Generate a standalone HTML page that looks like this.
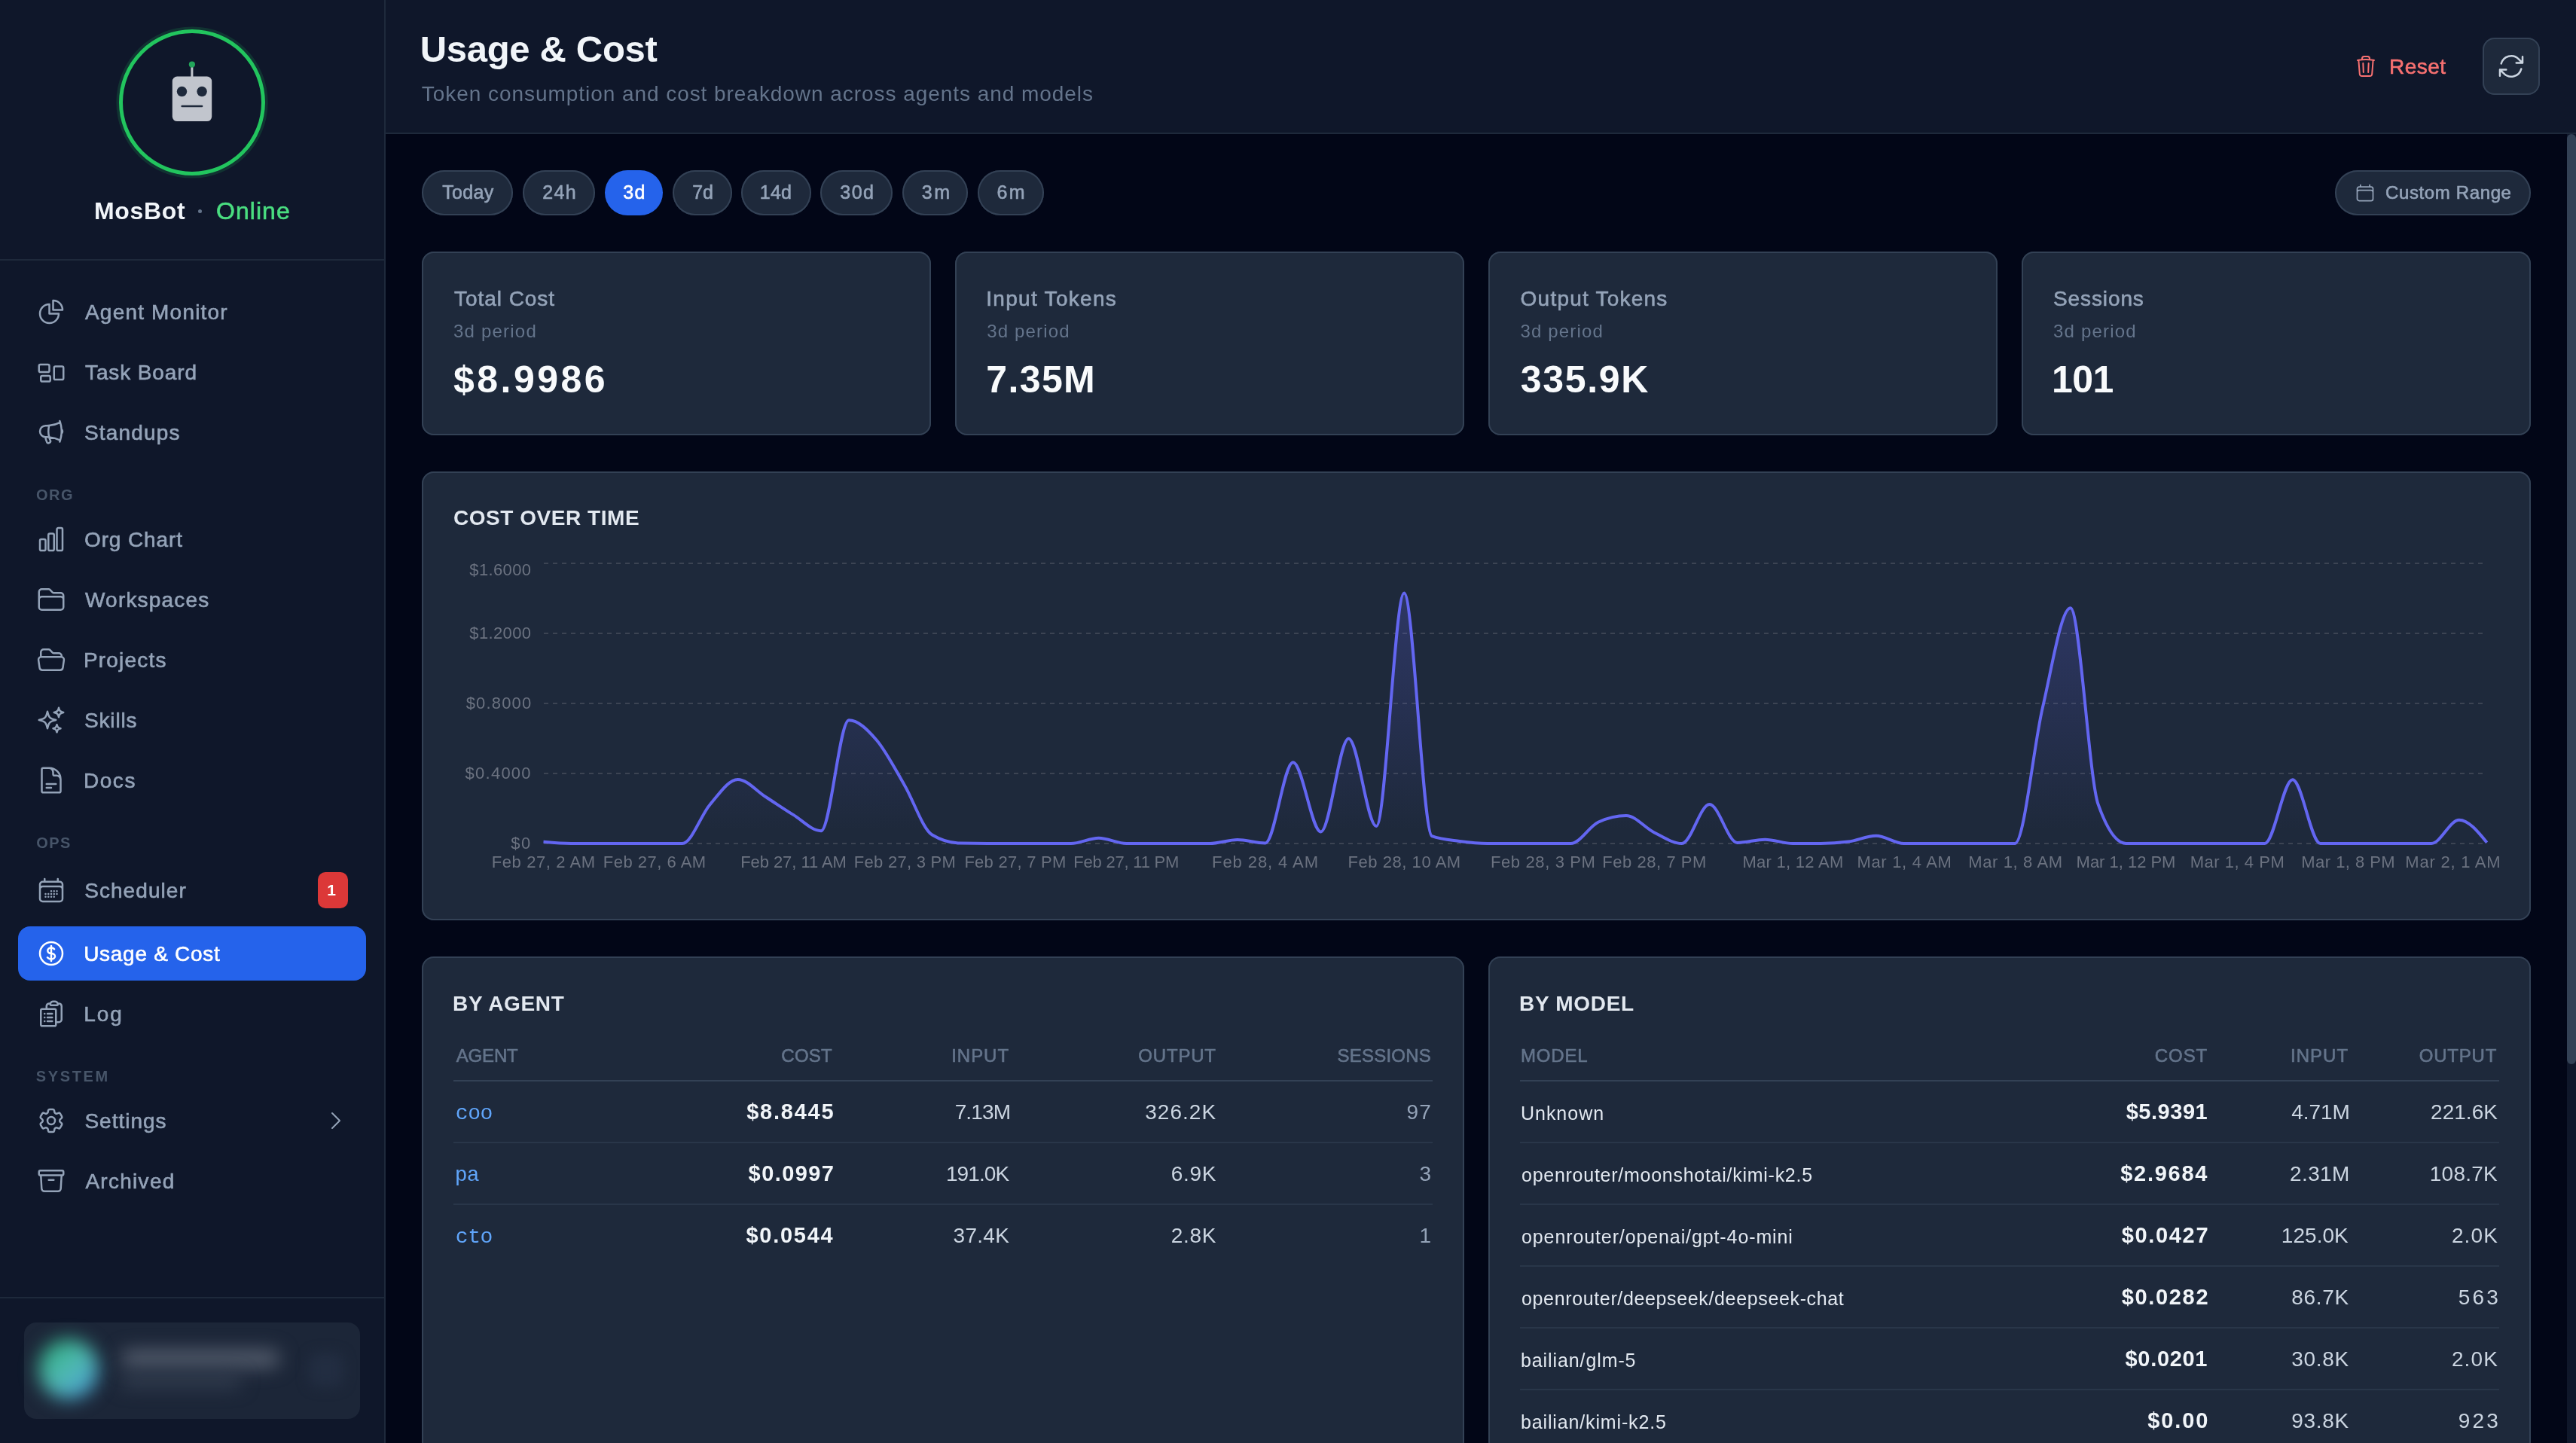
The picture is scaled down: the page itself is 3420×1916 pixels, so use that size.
<!DOCTYPE html>
<html><head><meta charset="utf-8"><title>Usage &amp; Cost</title>
<style>
html,body{margin:0;padding:0;background:#020617;overflow:hidden}
#root{zoom:2;will-change:transform;position:relative;width:1710px;height:958px;overflow:hidden;background:#020617;font-family:'Liberation Sans', sans-serif}
@media (max-width:1800px){#root{zoom:1}}
.t{position:absolute;white-space:nowrap}
.r{position:absolute}
svg{overflow:visible}
</style></head><body><div id="root">
<div class="r" style="left:0px;top:0px;width:256px;height:958px;background:#0f172a;"></div><div class="r" style="left:255px;top:0px;width:1px;height:958px;background:#1e293b;"></div><div class="r" style="left:79px;top:19.6px;width:97px;height:97px;border-radius:50%;box-sizing:border-box;border:2.5px solid #22c55e;box-shadow:0 0 0 1.8px rgba(34,197,94,0.16)"></div><svg class="r" style="left:0;top:0" width="256" height="172" viewBox="0 0 256 172">
<rect x="126.7" y="43" width="1.5" height="9" fill="#c1c5cd"/>
<circle cx="127.45" cy="42.8" r="2.05" fill="#22a55a"/>
<rect x="114.4" y="50.8" width="26.2" height="29.7" rx="3.2" fill="#c1c5cd"/>
<circle cx="120.75" cy="60.75" r="3.35" fill="#1e293b"/>
<circle cx="134.05" cy="60.75" r="3.35" fill="#1e293b"/>
<rect x="120.2" y="69.85" width="14.5" height="1.3" rx="0.65" fill="#1e293b"/>
</svg><div class="t" id="mosbot" style="top:128.06px;font-size:16px;line-height:24px;color:#f1f5f9;font-weight:700;font-family:'Liberation Sans', sans-serif;letter-spacing:0.330px;left:62.50px;">MosBot</div><div class="r" style="left:131.5px;top:138.8px;width:2.6px;height:2.6px;border-radius:50%;background:#64748b"></div><div class="t" id="online" style="top:128.06px;font-size:16px;line-height:24px;color:#4ade80;font-weight:400;font-family:'Liberation Sans', sans-serif;letter-spacing:0.520px;left:143.50px;-webkit-text-stroke:0.3px currentColor;">Online</div><div class="r" style="left:0px;top:172px;width:255px;height:1px;background:#1e293b;"></div><svg style="position:absolute;left:24px;top:197.0px" width="20" height="20" viewBox="0 0 24 24" fill="none" stroke="#94a3b8" stroke-width="1.5" stroke-linecap="round" stroke-linejoin="round"><path d="M10.5 6a7.5 7.5 0 1 0 7.5 7.5h-7.5V6Z"/><path d="M13.5 10.5H21A7.5 7.5 0 0 0 13.5 3v7.5Z"/></svg><div class="t" id="nav_am" style="top:197.74px;font-size:14px;line-height:20px;color:#94a3b8;font-weight:400;font-family:'Liberation Sans', sans-serif;letter-spacing:0.596px;left:56.50px;-webkit-text-stroke:0.3px currentColor;">Agent Monitor</div><svg style="position:absolute;left:24px;top:237.0px" width="20" height="20" viewBox="0 0 24 24" fill="none" stroke="#94a3b8" stroke-width="1.5" stroke-linecap="round" stroke-linejoin="round"><path d="M2.25 7.125C2.25 6.504 2.754 6 3.375 6h6c.621 0 1.125.504 1.125 1.125v3.75c0 .621-.504 1.125-1.125 1.125h-6a1.125 1.125 0 0 1-1.125-1.125v-3.75ZM14.25 8.625c0-.621.504-1.125 1.125-1.125h5.25c.621 0 1.125.504 1.125 1.125v8.25c0 .621-.504 1.125-1.125 1.125h-5.25a1.125 1.125 0 0 1-1.125-1.125v-8.25ZM3.75 16.125c0-.621.504-1.125 1.125-1.125h5.25c.621 0 1.125.504 1.125 1.125v2.25c0 .621-.504 1.125-1.125 1.125h-5.25a1.125 1.125 0 0 1-1.125-1.125v-2.25Z"/></svg><div class="t" id="nav_tb" style="top:237.74px;font-size:14px;line-height:20px;color:#94a3b8;font-weight:400;font-family:'Liberation Sans', sans-serif;letter-spacing:0.444px;left:56.50px;-webkit-text-stroke:0.3px currentColor;">Task Board</div><svg style="position:absolute;left:24px;top:277.0px" width="20" height="20" viewBox="0 0 24 24" fill="none" stroke="#94a3b8" stroke-width="1.5" stroke-linecap="round" stroke-linejoin="round"><path d="M10.34 15.84c-.688-.06-1.386-.09-2.09-.09H7.5a4.5 4.5 0 1 1 0-9h.75c.704 0 1.402-.03 2.09-.09m0 9.18c.253.962.584 1.892.985 2.783.247.55.06 1.21-.463 1.511l-.657.38c-.551.318-1.26.117-1.527-.461a20.845 20.845 0 0 1-1.44-4.282m3.102.069a18.03 18.03 0 0 1-.59-4.59c0-1.586.205-3.124.59-4.59m0 9.18a23.848 23.848 0 0 1 8.835 2.535M10.34 6.66a23.847 23.847 0 0 0 8.835-2.535m0 0A23.74 23.74 0 0 0 18.795 3m.38 1.125a23.91 23.91 0 0 1 1.014 5.395m-1.014 8.855c-.118.38-.245.754-.38 1.125m.38-1.125a23.91 23.91 0 0 0 1.014-5.395m0-3.46c.495.413.811 1.035.811 1.73 0 .695-.316 1.317-.811 1.73m0-3.46a24.347 24.347 0 0 1 0 3.46"/></svg><div class="t" id="nav_st" style="top:277.74px;font-size:14px;line-height:20px;color:#94a3b8;font-weight:400;font-family:'Liberation Sans', sans-serif;letter-spacing:0.589px;left:56.00px;-webkit-text-stroke:0.3px currentColor;">Standups</div><svg style="position:absolute;left:24px;top:348.0px" width="20" height="20" viewBox="0 0 24 24" fill="none" stroke="#94a3b8" stroke-width="1.5" stroke-linecap="round" stroke-linejoin="round"><path d="M3 13.125C3 12.504 3.504 12 4.125 12h2.25c.621 0 1.125.504 1.125 1.125v6.75C7.5 20.496 6.996 21 6.375 21h-2.25A1.125 1.125 0 0 1 3 19.875v-6.75ZM9.75 8.625c0-.621.504-1.125 1.125-1.125h2.25c.621 0 1.125.504 1.125 1.125v11.25c0 .621-.504 1.125-1.125 1.125h-2.25a1.125 1.125 0 0 1-1.125-1.125V8.625ZM16.5 4.125c0-.621.504-1.125 1.125-1.125h2.25C20.496 3 21 3.504 21 4.125v15.75c0 .621-.504 1.125-1.125 1.125h-2.25a1.125 1.125 0 0 1-1.125-1.125V4.125Z"/></svg><div class="t" id="nav_oc" style="top:348.74px;font-size:14px;line-height:20px;color:#94a3b8;font-weight:400;font-family:'Liberation Sans', sans-serif;letter-spacing:0.438px;left:56.00px;-webkit-text-stroke:0.3px currentColor;">Org Chart</div><svg style="position:absolute;left:24px;top:388.0px" width="20" height="20" viewBox="0 0 24 24" fill="none" stroke="#94a3b8" stroke-width="1.5" stroke-linecap="round" stroke-linejoin="round"><path d="M2.25 12.75V12A2.25 2.25 0 0 1 4.5 9.75h15A2.25 2.25 0 0 1 21.75 12v.75m-8.69-6.44-2.12-2.12a1.5 1.5 0 0 0-1.061-.44H4.5A2.25 2.25 0 0 0 2.25 6v12a2.25 2.25 0 0 0 2.25 2.25h15A2.25 2.25 0 0 0 21.75 18V9a2.25 2.25 0 0 0-2.25-2.25h-5.379a1.5 1.5 0 0 1-1.06-.44Z"/></svg><div class="t" id="nav_ws" style="top:388.74px;font-size:14px;line-height:20px;color:#94a3b8;font-weight:400;font-family:'Liberation Sans', sans-serif;letter-spacing:0.600px;left:56.50px;-webkit-text-stroke:0.3px currentColor;">Workspaces</div><svg style="position:absolute;left:24px;top:428.0px" width="20" height="20" viewBox="0 0 24 24" fill="none" stroke="#94a3b8" stroke-width="1.5" stroke-linecap="round" stroke-linejoin="round"><path d="M3.75 9.776c.112-.017.227-.026.344-.026h15.812c.117 0 .232.009.344.026m-16.5 0a2.25 2.25 0 0 0-1.883 2.542l.857 6a2.25 2.25 0 0 0 2.227 1.932H19.05a2.25 2.25 0 0 0 2.227-1.932l.857-6a2.25 2.25 0 0 0-1.883-2.542m-16.5 0V6A2.25 2.25 0 0 1 6 3.75h3.879a1.5 1.5 0 0 1 1.06.44l2.122 2.12a1.5 1.5 0 0 0 1.06.44H18A2.25 2.25 0 0 1 20.25 9v.776"/></svg><div class="t" id="nav_pr" style="top:428.74px;font-size:14px;line-height:20px;color:#94a3b8;font-weight:400;font-family:'Liberation Sans', sans-serif;letter-spacing:0.589px;left:55.50px;-webkit-text-stroke:0.3px currentColor;">Projects</div><svg style="position:absolute;left:24px;top:468.0px" width="20" height="20" viewBox="0 0 24 24" fill="none" stroke="#94a3b8" stroke-width="1.5" stroke-linecap="round" stroke-linejoin="round"><path d="M9.813 15.904 9 18.75l-.813-2.846a4.5 4.5 0 0 0-3.09-3.09L2.25 12l2.846-.813a4.5 4.5 0 0 0 3.09-3.09L9 5.25l.813 2.846a4.5 4.5 0 0 0 3.09 3.09L15.75 12l-2.846.813a4.5 4.5 0 0 0-3.09 3.09ZM18.259 8.715 18 9.75l-.259-1.035a3.375 3.375 0 0 0-2.455-2.456L14.25 6l1.036-.259a3.375 3.375 0 0 0 2.455-2.456L18 2.25l.259 1.035a3.375 3.375 0 0 0 2.456 2.456L21.75 6l-1.035.259a3.375 3.375 0 0 0-2.456 2.456ZM16.894 20.567 16.5 21.75l-.394-1.183a2.25 2.25 0 0 0-1.423-1.423L13.5 18.75l1.183-.394a2.25 2.25 0 0 0 1.423-1.423l.394-1.183.394 1.183a2.25 2.25 0 0 0 1.423 1.423l1.183.394-1.183.394a2.25 2.25 0 0 0-1.423 1.423Z"/></svg><div class="t" id="nav_sk" style="top:468.74px;font-size:14px;line-height:20px;color:#94a3b8;font-weight:400;font-family:'Liberation Sans', sans-serif;letter-spacing:0.420px;left:56.00px;-webkit-text-stroke:0.3px currentColor;">Skills</div><svg style="position:absolute;left:24px;top:508.0px" width="20" height="20" viewBox="0 0 24 24" fill="none" stroke="#94a3b8" stroke-width="1.5" stroke-linecap="round" stroke-linejoin="round"><path d="M19.5 14.25v-2.625a3.375 3.375 0 0 0-3.375-3.375h-1.5A1.125 1.125 0 0 1 13.5 7.125v-1.5a3.375 3.375 0 0 0-3.375-3.375H8.25m0 12.75h7.5m-7.5 3H12M10.5 2.25H5.625c-.621 0-1.125.504-1.125 1.125v17.25c0 .621.504 1.125 1.125 1.125h12.75c.621 0 1.125-.504 1.125-1.125V11.25a9 9 0 0 0-9-9Z"/></svg><div class="t" id="nav_dc" style="top:508.74px;font-size:14px;line-height:20px;color:#94a3b8;font-weight:400;font-family:'Liberation Sans', sans-serif;letter-spacing:0.770px;left:55.50px;-webkit-text-stroke:0.3px currentColor;">Docs</div><svg style="position:absolute;left:24px;top:581.0px" width="20" height="20" viewBox="0 0 24 24" fill="none" stroke="#94a3b8" stroke-width="1.5" stroke-linecap="round" stroke-linejoin="round"><path d="M6.75 3v2.25M17.25 3v2.25M3 18.75V7.5a2.25 2.25 0 0 1 2.25-2.25h13.5A2.25 2.25 0 0 1 21 7.5v11.25m-18 0A2.25 2.25 0 0 0 5.25 21h13.5A2.25 2.25 0 0 0 21 18.75m-18 0v-7.5A2.25 2.25 0 0 1 5.25 9h13.5A2.25 2.25 0 0 1 21 11.25v7.5m-9-6h.008v.008H12v-.008ZM12 15h.008v.008H12V15Zm0 2.25h.008v.008H12v-.008ZM9.75 15h.008v.008H9.75V15Zm0 2.25h.008v.008H9.75v-.008ZM7.5 15h.008v.008H7.5V15Zm0 2.25h.008v.008H7.5v-.008Zm6.75-4.5h.008v.008h-.008v-.008Zm0 2.25h.008v.008h-.008V15Zm0 2.25h.008v.008h-.008v-.008Zm2.25-4.5h.008v.008H16.5v-.008Zm0 2.25h.008v.008H16.5V15Z"/></svg><div class="t" id="nav_sc" style="top:581.74px;font-size:14px;line-height:20px;color:#94a3b8;font-weight:400;font-family:'Liberation Sans', sans-serif;letter-spacing:0.530px;left:56.10px;-webkit-text-stroke:0.3px currentColor;">Scheduler</div><div class="r" style="left:12px;top:615px;width:231px;height:36px;background:#2563eb;border-radius:8px;"></div><svg style="position:absolute;left:24px;top:623.0px" width="20" height="20" viewBox="0 0 24 24" fill="none" stroke="#ffffff" stroke-width="1.5" stroke-linecap="round" stroke-linejoin="round"><path d="M12 6v12m-3-2.818.879.659c1.171.879 3.07.879 4.242 0 1.172-.879 1.172-2.303 0-3.182C13.536 12.219 12.768 12 12 12c-.725 0-1.45-.22-2.003-.659-1.106-.879-1.106-2.303 0-3.182s2.9-.879 4.006 0l.415.33M21 12a9 9 0 1 1-18 0 9 9 0 0 1 18 0Z"/></svg><div class="t" id="nav_uc" style="top:623.74px;font-size:14px;line-height:20px;color:#ffffff;font-weight:400;font-family:'Liberation Sans', sans-serif;letter-spacing:0.355px;left:55.60px;-webkit-text-stroke:0.3px currentColor;">Usage &amp; Cost</div><svg style="position:absolute;left:24px;top:663.0px" width="20" height="20" viewBox="0 0 24 24" fill="none" stroke="#94a3b8" stroke-width="1.5" stroke-linecap="round" stroke-linejoin="round"><path d="M9 12h3.75M9 15h3.75M9 18h3.75m3 .75H18a2.25 2.25 0 0 0 2.25-2.25V6.108c0-1.135-.845-2.098-1.976-2.192a48.424 48.424 0 0 0-1.123-.08m-5.801 0c-.065.21-.1.433-.1.664 0 .414.336.75.75.75h4.5a.75.75 0 0 0 .75-.75 2.25 2.25 0 0 0-.1-.664m-5.8 0A2.251 2.251 0 0 1 13.5 2.25H15c1.012 0 1.867.668 2.15 1.586m-5.8 0c-.376.023-.75.05-1.124.08C9.095 4.01 8.25 4.973 8.25 6.108V8.25m0 0H4.875c-.621 0-1.125.504-1.125 1.125v11.25c0 .621.504 1.125 1.125 1.125h9.75c.621 0 1.125-.504 1.125-1.125V9.375c0-.621-.504-1.125-1.125-1.125H8.25ZM6.75 12h.008v.008H6.75V12Zm0 3h.008v.008H6.75V15Zm0 3h.008v.008H6.75V18Z"/></svg><div class="t" id="nav_lg" style="top:663.74px;font-size:14px;line-height:20px;color:#94a3b8;font-weight:400;font-family:'Liberation Sans', sans-serif;letter-spacing:1.000px;left:55.60px;-webkit-text-stroke:0.3px currentColor;">Log</div><svg style="position:absolute;left:24px;top:734.0px" width="20" height="20" viewBox="0 0 24 24" fill="none" stroke="#94a3b8" stroke-width="1.5" stroke-linecap="round" stroke-linejoin="round"><path d="M9.594 3.94c.09-.542.56-.94 1.11-.94h2.593c.55 0 1.02.398 1.11.94l.213 1.281c.063.374.313.686.645.87.074.04.147.083.22.127.325.196.72.257 1.075.124l1.217-.456a1.125 1.125 0 0 1 1.37.49l1.296 2.247a1.125 1.125 0 0 1-.26 1.431l-1.003.827c-.293.241-.438.613-.43.992a7.723 7.723 0 0 1 0 .255c-.008.378.137.75.43.991l1.004.827c.424.35.534.955.26 1.43l-1.298 2.247a1.125 1.125 0 0 1-1.369.491l-1.217-.456c-.355-.133-.75-.072-1.076.124a6.47 6.47 0 0 1-.22.128c-.331.183-.581.495-.644.869l-.213 1.281c-.09.543-.56.94-1.11.94h-2.594c-.55 0-1.019-.398-1.11-.94l-.213-1.281c-.062-.374-.312-.686-.644-.87a6.52 6.52 0 0 1-.22-.127c-.325-.196-.72-.257-1.076-.124l-1.217.456a1.125 1.125 0 0 1-1.369-.49l-1.297-2.247a1.125 1.125 0 0 1 .26-1.431l1.004-.827c.292-.24.437-.613.43-.991a6.932 6.932 0 0 1 0-.255c.007-.38-.138-.751-.43-.992l-1.004-.827a1.125 1.125 0 0 1-.26-1.43l1.297-2.247a1.125 1.125 0 0 1 1.37-.491l1.216.456c.356.133.751.072 1.076-.124.072-.044.146-.086.22-.128.332-.183.582-.495.644-.869l.214-1.28Z"/><path d="M15 12a3 3 0 1 1-6 0 3 3 0 0 1 6 0Z"/></svg><div class="t" id="nav_se" style="top:734.74px;font-size:14px;line-height:20px;color:#94a3b8;font-weight:400;font-family:'Liberation Sans', sans-serif;letter-spacing:0.500px;left:56.20px;-webkit-text-stroke:0.3px currentColor;">Settings</div><svg style="position:absolute;left:24px;top:774.0px" width="20" height="20" viewBox="0 0 24 24" fill="none" stroke="#94a3b8" stroke-width="1.5" stroke-linecap="round" stroke-linejoin="round"><path d="m20.25 7.5-.625 10.632a2.25 2.25 0 0 1-2.247 2.118H6.622a2.25 2.25 0 0 1-2.247-2.118L3.75 7.5M10 11.25h4M3.375 7.5h17.25c.621 0 1.125-.504 1.125-1.125v-1.5c0-.621-.504-1.125-1.125-1.125H3.375c-.621 0-1.125.504-1.125 1.125v1.5c0 .621.504 1.125 1.125 1.125Z"/></svg><div class="t" id="nav_ar" style="top:774.74px;font-size:14px;line-height:20px;color:#94a3b8;font-weight:400;font-family:'Liberation Sans', sans-serif;letter-spacing:0.643px;left:56.70px;-webkit-text-stroke:0.3px currentColor;">Archived</div><div class="t" id="lbl_org" style="top:321.04px;font-size:10px;line-height:15px;color:#475569;font-weight:700;font-family:'Liberation Sans', sans-serif;letter-spacing:0.750px;left:24.00px;">ORG</div><div class="t" id="lbl_ops" style="top:552.03px;font-size:10px;line-height:15px;color:#475569;font-weight:700;font-family:'Liberation Sans', sans-serif;letter-spacing:0.700px;left:24.10px;">OPS</div><div class="t" id="lbl_sys" style="top:707.24px;font-size:10px;line-height:15px;color:#475569;font-weight:700;font-family:'Liberation Sans', sans-serif;letter-spacing:1.320px;left:23.90px;">SYSTEM</div><div class="r" style="left:211px;top:579px;width:20px;height:24px;background:#dc3838;border-radius:5px;"></div><div class="t" style="top:583.01px;font-size:10.5px;line-height:16px;color:#ffffff;font-weight:700;font-family:'Liberation Sans', sans-serif;left:-80.00px;width:600px;text-align:center;">1</div><svg style="position:absolute;left:215px;top:736px" width="16" height="16" viewBox="0 0 24 24" fill="none" stroke="#94a3b8" stroke-width="1.5" stroke-linecap="round" stroke-linejoin="round"><path d="m8.25 4.5 7.5 7.5-7.5 7.5"/></svg><div class="r" style="left:0px;top:861px;width:255px;height:1px;background:#1e293b;"></div><div class="r" style="left:16px;top:878px;width:223px;height:64px;background:#1c2638;border-radius:8px;"></div><div class="r" style="left:25.5px;top:889px;width:40px;height:40px;border-radius:50%;background:linear-gradient(140deg,#2fae80 10%,#4fb9b0 50%,#4a9fd8 90%);filter:blur(6px)"></div><div class="r" style="left:80px;top:896px;width:106px;height:12px;border-radius:6px;background:#535c6c;filter:blur(6px)"></div><div class="r" style="left:80px;top:913px;width:80px;height:8px;border-radius:4px;background:#354052;filter:blur(6px)"></div><div class="r" style="left:205px;top:898px;width:23px;height:23px;border-radius:6px;background:#222d41;filter:blur(4px)"></div><div class="r" style="left:256px;top:0px;width:1454px;height:88px;background:#0f172a;"></div><div class="r" style="left:256px;top:88px;width:1454px;height:1px;background:#1e293b;"></div><div class="t" id="title" style="top:16.26px;font-size:24.5px;line-height:32px;color:#f1f5f9;font-weight:700;font-family:'Liberation Sans', sans-serif;letter-spacing:-0.163px;left:278.90px;">Usage &amp; Cost</div><div class="t" id="subtitle" style="top:52.50px;font-size:14px;line-height:20px;color:#64748b;font-weight:400;font-family:'Liberation Sans', sans-serif;letter-spacing:0.474px;left:279.90px;">Token consumption and cost breakdown across agents and models</div><svg style="position:absolute;left:1562.6px;top:36px" width="16" height="16" viewBox="0 0 24 24" fill="none" stroke="#f87171" stroke-width="1.5" stroke-linecap="round" stroke-linejoin="round"><path d="m14.74 9-.346 9m-4.788 0L9.26 9m9.968-3.21c.342.052.682.107 1.022.166m-1.022-.165L18.16 19.673a2.25 2.25 0 0 1-2.244 2.077H8.084a2.25 2.25 0 0 1-2.244-2.077L4.772 5.79m14.456 0a48.108 48.108 0 0 0-3.478-.397m-12 .562c.34-.059.68-.114 1.022-.165m0 0a48.11 48.11 0 0 1 3.478-.397m7.5 0v-.916c0-1.18-.91-2.164-2.09-2.201a51.964 51.964 0 0 0-3.32 0c-1.18.037-2.09 1.022-2.09 2.201v.916m7.5 0a48.667 48.667 0 0 0-7.5 0"/></svg><div class="t" id="reset" style="top:34.35px;font-size:14px;line-height:20px;color:#f87171;font-weight:400;font-family:'Liberation Sans', sans-serif;letter-spacing:0.250px;left:1586.00px;-webkit-text-stroke:0.3px currentColor;">Reset</div><div class="r" style="left:1648px;top:25px;width:38px;height:38px;background:#1e293b;border-radius:8px;box-shadow:inset 0 0 0 1px #334155;"></div><svg style="position:absolute;left:1657px;top:34px" width="20" height="20" viewBox="0 0 24 24" fill="none" stroke="#cbd5e1" stroke-width="1.5" stroke-linecap="round" stroke-linejoin="round"><path d="M16.023 9.348h4.992v-.001M2.985 19.644v-4.992m0 0h4.992m-4.993 0 3.181 3.183a8.25 8.25 0 0 0 13.803-3.7M4.031 9.865a8.25 8.25 0 0 1 13.803-3.7l3.181 3.182m0-4.991v4.99"/></svg><div class="r" style="left:256px;top:89px;width:1448px;height:869px;background:#020617;"></div><div class="r" style="left:1704px;top:89px;width:6px;height:869px;background:#0f172a;"></div><div class="r" style="left:1704px;top:89px;width:6px;height:617.5px;background:#334155;border-radius:3px;"></div><div class="r" style="left:280.1px;top:113px;width:60.5px;height:30px;background:#1e293b;border-radius:15px;box-shadow:inset 0 0 0 1px #334155;"></div><div class="t" id="pill0" style="top:119.47px;font-size:12.5px;line-height:16px;color:#94a3b8;font-weight:400;font-family:'Liberation Sans', sans-serif;letter-spacing:0.175px;left:10.70px;width:600px;text-align:center;-webkit-text-stroke:0.3px currentColor;">Today</div><div class="r" style="left:347px;top:113px;width:48.2px;height:30px;background:#1e293b;border-radius:15px;box-shadow:inset 0 0 0 1px #334155;"></div><div class="t" id="pill1" style="top:119.47px;font-size:12.5px;line-height:16px;color:#94a3b8;font-weight:400;font-family:'Liberation Sans', sans-serif;letter-spacing:0.700px;left:71.60px;width:600px;text-align:center;-webkit-text-stroke:0.3px currentColor;">24h</div><div class="r" style="left:401.4px;top:113px;width:38.8px;height:30px;background:#2563eb;border-radius:15px;"></div><div class="t" id="pill2" style="top:119.47px;font-size:12.5px;line-height:16px;color:#ffffff;font-weight:400;font-family:'Liberation Sans', sans-serif;letter-spacing:0.600px;left:121.20px;width:600px;text-align:center;-webkit-text-stroke:0.3px currentColor;">3d</div><div class="r" style="left:446.6px;top:113px;width:39.3px;height:30px;background:#1e293b;border-radius:15px;box-shadow:inset 0 0 0 1px #334155;"></div><div class="t" id="pill3" style="top:119.47px;font-size:12.5px;line-height:16px;color:#94a3b8;font-weight:400;font-family:'Liberation Sans', sans-serif;letter-spacing:-0.100px;left:166.50px;width:600px;text-align:center;-webkit-text-stroke:0.3px currentColor;">7d</div><div class="r" style="left:492px;top:113px;width:46.3px;height:30px;background:#1e293b;border-radius:15px;box-shadow:inset 0 0 0 1px #334155;"></div><div class="t" id="pill4" style="top:119.47px;font-size:12.5px;line-height:16px;color:#94a3b8;font-weight:400;font-family:'Liberation Sans', sans-serif;letter-spacing:0.150px;left:215.00px;width:600px;text-align:center;-webkit-text-stroke:0.3px currentColor;">14d</div><div class="r" style="left:544.5px;top:113px;width:48.1px;height:30px;background:#1e293b;border-radius:15px;box-shadow:inset 0 0 0 1px #334155;"></div><div class="t" id="pill5" style="top:119.47px;font-size:12.5px;line-height:16px;color:#94a3b8;font-weight:400;font-family:'Liberation Sans', sans-serif;letter-spacing:0.750px;left:269.20px;width:600px;text-align:center;-webkit-text-stroke:0.3px currentColor;">30d</div><div class="r" style="left:599px;top:113px;width:43.7px;height:30px;background:#1e293b;border-radius:15px;box-shadow:inset 0 0 0 1px #334155;"></div><div class="t" id="pill6" style="top:119.47px;font-size:12.5px;line-height:16px;color:#94a3b8;font-weight:400;font-family:'Liberation Sans', sans-serif;letter-spacing:1.300px;left:321.80px;width:600px;text-align:center;-webkit-text-stroke:0.3px currentColor;">3m</div><div class="r" style="left:649px;top:113px;width:44.2px;height:30px;background:#1e293b;border-radius:15px;box-shadow:inset 0 0 0 1px #334155;"></div><div class="t" id="pill7" style="top:119.47px;font-size:12.5px;line-height:16px;color:#94a3b8;font-weight:400;font-family:'Liberation Sans', sans-serif;letter-spacing:1.200px;left:371.60px;width:600px;text-align:center;-webkit-text-stroke:0.3px currentColor;">6m</div><div class="r" style="left:1550.2px;top:113px;width:129.6px;height:30px;background:#1e293b;border-radius:15px;box-shadow:inset 0 0 0 1px #334155;"></div><svg style="position:absolute;left:1563px;top:121px" width="14" height="14" viewBox="0 0 24 24" fill="none" stroke="#94a3b8" stroke-width="1.5" stroke-linecap="round" stroke-linejoin="round"><path d="M6.75 3v2.25M17.25 3v2.25M3 18.75V7.5a2.25 2.25 0 0 1 2.25-2.25h13.5A2.25 2.25 0 0 1 21 7.5v11.25m-18 0A2.25 2.25 0 0 0 5.25 21h13.5A2.25 2.25 0 0 0 21 18.75m-18 0v-7.5A2.25 2.25 0 0 1 5.25 9h13.5A2.25 2.25 0 0 1 21 11.25v7.5"/></svg><div class="t" id="custom" style="top:120.04px;font-size:12px;line-height:16px;color:#94a3b8;font-weight:400;font-family:'Liberation Sans', sans-serif;letter-spacing:0.313px;left:1583.50px;-webkit-text-stroke:0.3px currentColor;">Custom Range</div><div class="r" style="left:280px;top:167px;width:338px;height:122px;background:#1e293b;border-radius:8px;box-shadow:inset 0 0 0 1px #334155;"></div><div class="t" id="card_l0" style="top:188.25px;font-size:14px;line-height:20px;color:#94a3b8;font-weight:400;font-family:'Liberation Sans', sans-serif;letter-spacing:0.478px;left:301.50px;-webkit-text-stroke:0.3px currentColor;">Total Cost</div><div class="t" id="card_p0" style="top:212.24px;font-size:12px;line-height:16px;color:#64748b;font-weight:400;font-family:'Liberation Sans', sans-serif;letter-spacing:0.604px;left:301.00px;">3d period</div><div class="t" id="card_v0" style="top:236.09px;font-size:25px;line-height:32px;color:#f8fafc;font-weight:700;font-family:'Liberation Sans', sans-serif;letter-spacing:1.737px;left:301.00px;">$8.9986</div><div class="r" style="left:634px;top:167px;width:338px;height:122px;background:#1e293b;border-radius:8px;box-shadow:inset 0 0 0 1px #334155;"></div><div class="t" id="card_l1" style="top:188.25px;font-size:14px;line-height:20px;color:#94a3b8;font-weight:400;font-family:'Liberation Sans', sans-serif;letter-spacing:0.655px;left:654.60px;-webkit-text-stroke:0.3px currentColor;">Input Tokens</div><div class="t" id="card_p1" style="top:212.24px;font-size:12px;line-height:16px;color:#64748b;font-weight:400;font-family:'Liberation Sans', sans-serif;letter-spacing:0.581px;left:655.10px;">3d period</div><div class="t" id="card_v1" style="top:236.09px;font-size:25px;line-height:32px;color:#f8fafc;font-weight:700;font-family:'Liberation Sans', sans-serif;letter-spacing:0.700px;left:654.60px;">7.35M</div><div class="r" style="left:988px;top:167px;width:338px;height:122px;background:#1e293b;border-radius:8px;box-shadow:inset 0 0 0 1px #334155;"></div><div class="t" id="card_l2" style="top:188.25px;font-size:14px;line-height:20px;color:#94a3b8;font-weight:400;font-family:'Liberation Sans', sans-serif;letter-spacing:0.610px;left:1009.30px;-webkit-text-stroke:0.3px currentColor;">Output Tokens</div><div class="t" id="card_p2" style="top:212.24px;font-size:12px;line-height:16px;color:#64748b;font-weight:400;font-family:'Liberation Sans', sans-serif;letter-spacing:0.567px;left:1009.30px;">3d period</div><div class="t" id="card_v2" style="top:236.09px;font-size:25px;line-height:32px;color:#f8fafc;font-weight:700;font-family:'Liberation Sans', sans-serif;letter-spacing:0.840px;left:1009.40px;">335.9K</div><div class="r" style="left:1342px;top:167px;width:338px;height:122px;background:#1e293b;border-radius:8px;box-shadow:inset 0 0 0 1px #334155;"></div><div class="t" id="card_l3" style="top:188.25px;font-size:14px;line-height:20px;color:#94a3b8;font-weight:400;font-family:'Liberation Sans', sans-serif;letter-spacing:0.445px;left:1363.00px;-webkit-text-stroke:0.3px currentColor;">Sessions</div><div class="t" id="card_p3" style="top:212.24px;font-size:12px;line-height:16px;color:#64748b;font-weight:400;font-family:'Liberation Sans', sans-serif;letter-spacing:0.596px;left:1363.00px;">3d period</div><div class="t" id="card_v3" style="top:236.09px;font-size:25px;line-height:32px;color:#f8fafc;font-weight:700;font-family:'Liberation Sans', sans-serif;letter-spacing:-0.300px;left:1362.00px;">101</div><div class="r" style="left:280px;top:313px;width:1400px;height:298px;background:#1e293b;border-radius:8px;box-shadow:inset 0 0 0 1px #334155;"></div><div class="t" id="chart_title" style="top:334.15px;font-size:14px;line-height:20px;color:#e2e8f0;font-weight:700;font-family:'Liberation Sans', sans-serif;letter-spacing:0.269px;left:301.00px;">COST OVER TIME</div><svg class="r" style="left:0;top:0" width="1710" height="958" viewBox="0 0 1710 958">
<defs><linearGradient id="cg" x1="0" y1="0" x2="0" y2="1"><stop offset="5%" stop-color="#6366f1" stop-opacity="0.22"/><stop offset="95%" stop-color="#6366f1" stop-opacity="0"/></linearGradient></defs>
<line x1="361" x2="1651" y1="374" y2="374" stroke="#3c4453" stroke-dasharray="3 3" stroke-width="1"/><line x1="361" x2="1651" y1="420.5" y2="420.5" stroke="#3c4453" stroke-dasharray="3 3" stroke-width="1"/><line x1="361" x2="1651" y1="467" y2="467" stroke="#3c4453" stroke-dasharray="3 3" stroke-width="1"/><line x1="361" x2="1651" y1="513.5" y2="513.5" stroke="#3c4453" stroke-dasharray="3 3" stroke-width="1"/><line x1="361" x2="1651" y1="560" y2="560" stroke="#3c4453" stroke-dasharray="3 3" stroke-width="1"/>
<path d="M360.75,558.90C366.89,559.45,373.04,560.00,379.18,560.00C385.32,560.00,391.47,560.00,397.61,560.00C403.75,560.00,409.90,560.00,416.04,560.00C422.18,560.00,428.33,560.00,434.47,560.00C440.61,560.00,446.76,560.00,452.90,560.00C459.04,560.00,465.19,541.19,471.33,534.10C477.47,527.01,483.62,517.45,489.76,517.45C495.90,517.45,502.05,525.08,508.19,529.00C514.33,532.92,520.48,537.18,526.62,540.95C532.76,544.72,538.91,551.60,545.05,551.60C551.19,551.60,557.34,478.10,563.48,478.10C569.62,478.10,575.77,484.18,581.91,491.35C588.05,498.52,594.20,510.62,600.34,521.10C606.48,531.58,612.63,550.55,618.77,554.25C624.91,557.95,631.06,559.67,637.20,559.80C643.34,559.93,649.49,560.00,655.63,560.00C661.77,560.00,667.92,560.00,674.06,560.00C680.20,560.00,686.35,560.00,692.49,560.00C698.63,560.00,704.78,560.00,710.92,560.00C717.06,560.00,723.21,556.40,729.35,556.40C735.49,556.40,741.64,560.00,747.78,560.00C753.92,560.00,760.07,560.00,766.21,560.00C772.35,560.00,778.50,560.00,784.64,560.00C790.78,560.00,796.93,560.00,803.07,560.00C809.21,560.00,815.36,557.50,821.50,557.50C827.64,557.50,833.79,559.70,839.93,559.70C846.07,559.70,852.22,506.15,858.36,506.15C864.50,506.15,870.65,552.20,876.79,552.20C882.93,552.20,889.08,490.35,895.22,490.35C901.36,490.35,907.51,548.50,913.65,548.50C919.79,548.50,925.94,393.80,932.08,393.80C938.22,393.80,944.37,552.83,950.51,555.10C956.65,557.37,962.80,557.68,968.94,558.50C975.08,559.32,981.23,560.00,987.37,560.00C993.51,560.00,999.66,560.00,1005.80,560.00C1011.94,560.00,1018.09,560.00,1024.23,560.00C1030.37,560.00,1036.52,560.00,1042.66,560.00C1048.80,560.00,1054.95,548.58,1061.09,545.75C1067.23,542.92,1073.38,541.50,1079.52,541.50C1085.66,541.50,1091.81,549.52,1097.95,552.60C1104.09,555.68,1110.24,560.00,1116.38,560.00C1122.52,560.00,1128.67,534.05,1134.81,534.05C1140.95,534.05,1147.10,559.45,1153.24,559.45C1159.38,559.45,1165.53,557.35,1171.67,557.35C1177.81,557.35,1183.96,560.00,1190.10,560.00C1196.24,560.00,1202.39,560.00,1208.53,560.00C1214.67,560.00,1220.82,559.60,1226.96,558.80C1233.10,558.00,1239.25,554.85,1245.39,554.85C1251.53,554.85,1257.68,560.00,1263.82,560.00C1269.96,560.00,1276.11,560.00,1282.25,560.00C1288.39,560.00,1294.54,560.00,1300.68,560.00C1306.82,560.00,1312.97,560.00,1319.11,560.00C1325.25,560.00,1331.40,560.00,1337.54,560.00C1343.68,560.00,1349.83,495.62,1355.97,469.55C1362.11,443.48,1368.26,403.60,1374.40,403.60C1380.54,403.60,1386.69,516.83,1392.83,534.10C1398.97,551.37,1405.12,560.00,1411.26,560.00C1417.40,560.00,1423.55,560.00,1429.69,560.00C1435.83,560.00,1441.98,560.00,1448.12,560.00C1454.26,560.00,1460.41,560.00,1466.55,560.00C1472.69,560.00,1478.84,560.00,1484.98,560.00C1491.12,560.00,1497.27,560.00,1503.41,560.00C1509.55,560.00,1515.70,517.60,1521.84,517.60C1527.98,517.60,1534.13,560.00,1540.27,560.00C1546.41,560.00,1552.56,560.00,1558.70,560.00C1564.84,560.00,1570.99,560.00,1577.13,560.00C1583.27,560.00,1589.42,560.00,1595.56,560.00C1601.70,560.00,1607.85,560.00,1613.99,560.00C1620.13,560.00,1626.28,544.35,1632.42,544.35C1638.56,544.35,1644.71,551.85,1650.85,559.35L1650.85,560L360.75,560Z" fill="url(#cg)" stroke="none"/>
<path d="M360.75,558.90C366.89,559.45,373.04,560.00,379.18,560.00C385.32,560.00,391.47,560.00,397.61,560.00C403.75,560.00,409.90,560.00,416.04,560.00C422.18,560.00,428.33,560.00,434.47,560.00C440.61,560.00,446.76,560.00,452.90,560.00C459.04,560.00,465.19,541.19,471.33,534.10C477.47,527.01,483.62,517.45,489.76,517.45C495.90,517.45,502.05,525.08,508.19,529.00C514.33,532.92,520.48,537.18,526.62,540.95C532.76,544.72,538.91,551.60,545.05,551.60C551.19,551.60,557.34,478.10,563.48,478.10C569.62,478.10,575.77,484.18,581.91,491.35C588.05,498.52,594.20,510.62,600.34,521.10C606.48,531.58,612.63,550.55,618.77,554.25C624.91,557.95,631.06,559.67,637.20,559.80C643.34,559.93,649.49,560.00,655.63,560.00C661.77,560.00,667.92,560.00,674.06,560.00C680.20,560.00,686.35,560.00,692.49,560.00C698.63,560.00,704.78,560.00,710.92,560.00C717.06,560.00,723.21,556.40,729.35,556.40C735.49,556.40,741.64,560.00,747.78,560.00C753.92,560.00,760.07,560.00,766.21,560.00C772.35,560.00,778.50,560.00,784.64,560.00C790.78,560.00,796.93,560.00,803.07,560.00C809.21,560.00,815.36,557.50,821.50,557.50C827.64,557.50,833.79,559.70,839.93,559.70C846.07,559.70,852.22,506.15,858.36,506.15C864.50,506.15,870.65,552.20,876.79,552.20C882.93,552.20,889.08,490.35,895.22,490.35C901.36,490.35,907.51,548.50,913.65,548.50C919.79,548.50,925.94,393.80,932.08,393.80C938.22,393.80,944.37,552.83,950.51,555.10C956.65,557.37,962.80,557.68,968.94,558.50C975.08,559.32,981.23,560.00,987.37,560.00C993.51,560.00,999.66,560.00,1005.80,560.00C1011.94,560.00,1018.09,560.00,1024.23,560.00C1030.37,560.00,1036.52,560.00,1042.66,560.00C1048.80,560.00,1054.95,548.58,1061.09,545.75C1067.23,542.92,1073.38,541.50,1079.52,541.50C1085.66,541.50,1091.81,549.52,1097.95,552.60C1104.09,555.68,1110.24,560.00,1116.38,560.00C1122.52,560.00,1128.67,534.05,1134.81,534.05C1140.95,534.05,1147.10,559.45,1153.24,559.45C1159.38,559.45,1165.53,557.35,1171.67,557.35C1177.81,557.35,1183.96,560.00,1190.10,560.00C1196.24,560.00,1202.39,560.00,1208.53,560.00C1214.67,560.00,1220.82,559.60,1226.96,558.80C1233.10,558.00,1239.25,554.85,1245.39,554.85C1251.53,554.85,1257.68,560.00,1263.82,560.00C1269.96,560.00,1276.11,560.00,1282.25,560.00C1288.39,560.00,1294.54,560.00,1300.68,560.00C1306.82,560.00,1312.97,560.00,1319.11,560.00C1325.25,560.00,1331.40,560.00,1337.54,560.00C1343.68,560.00,1349.83,495.62,1355.97,469.55C1362.11,443.48,1368.26,403.60,1374.40,403.60C1380.54,403.60,1386.69,516.83,1392.83,534.10C1398.97,551.37,1405.12,560.00,1411.26,560.00C1417.40,560.00,1423.55,560.00,1429.69,560.00C1435.83,560.00,1441.98,560.00,1448.12,560.00C1454.26,560.00,1460.41,560.00,1466.55,560.00C1472.69,560.00,1478.84,560.00,1484.98,560.00C1491.12,560.00,1497.27,560.00,1503.41,560.00C1509.55,560.00,1515.70,517.60,1521.84,517.60C1527.98,517.60,1534.13,560.00,1540.27,560.00C1546.41,560.00,1552.56,560.00,1558.70,560.00C1564.84,560.00,1570.99,560.00,1577.13,560.00C1583.27,560.00,1589.42,560.00,1595.56,560.00C1601.70,560.00,1607.85,560.00,1613.99,560.00C1620.13,560.00,1626.28,544.35,1632.42,544.35C1638.56,544.35,1644.71,551.85,1650.85,559.35" fill="none" stroke="#6366f1" stroke-width="2"/>
</svg><div class="t" id="yl0" style="top:370.29px;font-size:11px;line-height:16px;color:#6b7280;font-weight:400;font-family:'Liberation Sans', sans-serif;letter-spacing:0.183px;right:1357.30px;">$1.6000</div><div class="t" id="yl1" style="top:412.59px;font-size:11px;line-height:16px;color:#6b7280;font-weight:400;font-family:'Liberation Sans', sans-serif;letter-spacing:0.183px;right:1357.30px;">$1.2000</div><div class="t" id="yl2" style="top:459.09px;font-size:11px;line-height:16px;color:#6b7280;font-weight:400;font-family:'Liberation Sans', sans-serif;letter-spacing:0.584px;right:1356.80px;">$0.8000</div><div class="t" id="yl3" style="top:505.59px;font-size:11px;line-height:16px;color:#6b7280;font-weight:400;font-family:'Liberation Sans', sans-serif;letter-spacing:0.621px;right:1357.10px;">$0.4000</div><div class="t" id="yl4" style="top:552.09px;font-size:11px;line-height:16px;color:#6b7280;font-weight:400;font-family:'Liberation Sans', sans-serif;letter-spacing:0.800px;right:1357.10px;">$0</div><div class="t" id="xl0" style="top:564.39px;font-size:11px;line-height:16px;color:#6b7280;font-weight:400;font-family:'Liberation Sans', sans-serif;letter-spacing:0.297px;left:60.88px;width:600px;text-align:center;">Feb 27, 2 AM</div><div class="t" id="xl1" style="top:564.39px;font-size:11px;line-height:16px;color:#6b7280;font-weight:400;font-family:'Liberation Sans', sans-serif;letter-spacing:0.250px;left:134.63px;width:600px;text-align:center;">Feb 27, 6 AM</div><div class="t" id="xl2" style="top:564.39px;font-size:11px;line-height:16px;color:#6b7280;font-weight:400;font-family:'Liberation Sans', sans-serif;letter-spacing:-0.033px;left:226.75px;width:600px;text-align:center;">Feb 27, 11 AM</div><div class="t" id="xl3" style="top:564.39px;font-size:11px;line-height:16px;color:#6b7280;font-weight:400;font-family:'Liberation Sans', sans-serif;letter-spacing:0.136px;left:300.75px;width:600px;text-align:center;">Feb 27, 3 PM</div><div class="t" id="xl4" style="top:564.39px;font-size:11px;line-height:16px;color:#6b7280;font-weight:400;font-family:'Liberation Sans', sans-serif;letter-spacing:0.129px;left:374.00px;width:600px;text-align:center;">Feb 27, 7 PM</div><div class="t" id="xl5" style="top:564.39px;font-size:11px;line-height:16px;color:#6b7280;font-weight:400;font-family:'Liberation Sans', sans-serif;letter-spacing:-0.107px;left:447.62px;width:600px;text-align:center;">Feb 27, 11 PM</div><div class="t" id="xl6" style="top:564.39px;font-size:11px;line-height:16px;color:#6b7280;font-weight:400;font-family:'Liberation Sans', sans-serif;letter-spacing:0.462px;left:540.00px;width:600px;text-align:center;">Feb 28, 4 AM</div><div class="t" id="xl7" style="top:564.39px;font-size:11px;line-height:16px;color:#6b7280;font-weight:400;font-family:'Liberation Sans', sans-serif;letter-spacing:0.276px;left:632.32px;width:600px;text-align:center;">Feb 28, 10 AM</div><div class="t" id="xl8" style="top:564.39px;font-size:11px;line-height:16px;color:#6b7280;font-weight:400;font-family:'Liberation Sans', sans-serif;letter-spacing:0.318px;left:724.37px;width:600px;text-align:center;">Feb 28, 3 PM</div><div class="t" id="xl9" style="top:564.39px;font-size:11px;line-height:16px;color:#6b7280;font-weight:400;font-family:'Liberation Sans', sans-serif;letter-spacing:0.272px;left:798.31px;width:600px;text-align:center;">Feb 28, 7 PM</div><div class="t" id="xl10" style="top:564.39px;font-size:11px;line-height:16px;color:#6b7280;font-weight:400;font-family:'Liberation Sans', sans-serif;letter-spacing:0.136px;left:890.25px;width:600px;text-align:center;">Mar 1, 12 AM</div><div class="t" id="xl11" style="top:564.39px;font-size:11px;line-height:16px;color:#6b7280;font-weight:400;font-family:'Liberation Sans', sans-serif;letter-spacing:0.340px;left:964.25px;width:600px;text-align:center;">Mar 1, 4 AM</div><div class="t" id="xl12" style="top:564.39px;font-size:11px;line-height:16px;color:#6b7280;font-weight:400;font-family:'Liberation Sans', sans-serif;letter-spacing:0.320px;left:1038.00px;width:600px;text-align:center;">Mar 1, 8 AM</div><div class="t" id="xl13" style="top:564.39px;font-size:11px;line-height:16px;color:#6b7280;font-weight:400;font-family:'Liberation Sans', sans-serif;letter-spacing:-0.009px;left:1111.25px;width:600px;text-align:center;">Mar 1, 12 PM</div><div class="t" id="xl14" style="top:564.39px;font-size:11px;line-height:16px;color:#6b7280;font-weight:400;font-family:'Liberation Sans', sans-serif;letter-spacing:0.270px;left:1185.25px;width:600px;text-align:center;">Mar 1, 4 PM</div><div class="t" id="xl15" style="top:564.39px;font-size:11px;line-height:16px;color:#6b7280;font-weight:400;font-family:'Liberation Sans', sans-serif;letter-spacing:0.225px;left:1258.87px;width:600px;text-align:center;">Mar 1, 8 PM</div><div class="t" id="xl16" style="top:564.39px;font-size:11px;line-height:16px;color:#6b7280;font-weight:400;font-family:'Liberation Sans', sans-serif;letter-spacing:0.385px;left:1328.43px;width:600px;text-align:center;">Mar 2, 1 AM</div><div class="r" style="left:280px;top:635px;width:692px;height:330px;background:#1e293b;border-radius:8px;box-shadow:inset 0 0 0 1px #334155;"></div><div class="t" id="t_agent" style="top:656.65px;font-size:14px;line-height:20px;color:#e2e8f0;font-weight:700;font-family:'Liberation Sans', sans-serif;letter-spacing:0.339px;left:300.50px;">BY AGENT</div><div class="r" style="left:301px;top:717px;width:650px;height:1px;background:#334155;"></div><div class="r" style="left:988px;top:635px;width:692px;height:330px;background:#1e293b;border-radius:8px;box-shadow:inset 0 0 0 1px #334155;"></div><div class="t" id="t_model" style="top:656.65px;font-size:14px;line-height:20px;color:#e2e8f0;font-weight:700;font-family:'Liberation Sans', sans-serif;letter-spacing:0.346px;left:1008.50px;">BY MODEL</div><div class="r" style="left:1009px;top:717px;width:650px;height:1px;background:#334155;"></div><div class="t" id="ah0" style="top:692.84px;font-size:12px;line-height:16px;color:#64748b;font-weight:400;font-family:'Liberation Sans', sans-serif;letter-spacing:-0.100px;left:302.90px;-webkit-text-stroke:0.3px currentColor;">AGENT</div><div class="t" id="ah1" style="top:692.84px;font-size:12px;line-height:16px;color:#64748b;font-weight:400;font-family:'Liberation Sans', sans-serif;letter-spacing:0.129px;right:1157.50px;-webkit-text-stroke:0.3px currentColor;">COST</div><div class="t" id="ah2" style="top:692.84px;font-size:12px;line-height:16px;color:#64748b;font-weight:400;font-family:'Liberation Sans', sans-serif;letter-spacing:0.475px;right:1040.00px;-webkit-text-stroke:0.3px currentColor;">INPUT</div><div class="t" id="ah3" style="top:692.84px;font-size:12px;line-height:16px;color:#64748b;font-weight:400;font-family:'Liberation Sans', sans-serif;letter-spacing:0.400px;right:902.60px;-webkit-text-stroke:0.3px currentColor;">OUTPUT</div><div class="t" id="ah4" style="top:692.84px;font-size:12px;line-height:16px;color:#64748b;font-weight:400;font-family:'Liberation Sans', sans-serif;letter-spacing:0.115px;right:760.00px;-webkit-text-stroke:0.3px currentColor;">SESSIONS</div><div class="r" style="left:301px;top:758px;width:650px;height:1px;background:rgba(51,65,85,0.55);"></div><div class="t" id="ar0_0" style="top:729.37px;font-size:14px;line-height:20px;color:#60a5fa;font-weight:400;font-family:'Liberation Mono', monospace;letter-spacing:-0.200px;left:302.40px;">coo</div><div class="t" id="ar0_1" style="top:728.08px;font-size:14.5px;line-height:20px;color:#f1f5f9;font-weight:700;font-family:'Liberation Sans', sans-serif;letter-spacing:0.882px;right:1155.80px;">$8.8445</div><div class="t" id="ar0_2" style="top:728.25px;font-size:14px;line-height:20px;color:#cbd5e1;font-weight:400;font-family:'Liberation Sans', sans-serif;letter-spacing:-0.425px;right:1039.40px;">7.13M</div><div class="t" id="ar0_3" style="top:728.25px;font-size:14px;line-height:20px;color:#cbd5e1;font-weight:400;font-family:'Liberation Sans', sans-serif;letter-spacing:0.520px;right:902.40px;">326.2K</div><div class="t" id="ar0_4" style="top:728.25px;font-size:14px;line-height:20px;color:#94a3b8;font-weight:400;font-family:'Liberation Sans', sans-serif;letter-spacing:0.600px;right:759.50px;">97</div><div class="r" style="left:301px;top:799px;width:650px;height:1px;background:rgba(51,65,85,0.55);"></div><div class="t" id="ar1_0" style="top:770.37px;font-size:14px;line-height:20px;color:#60a5fa;font-weight:400;font-family:'Liberation Mono', monospace;letter-spacing:-0.400px;left:301.90px;">pa</div><div class="t" id="ar1_1" style="top:769.08px;font-size:14.5px;line-height:20px;color:#f1f5f9;font-weight:700;font-family:'Liberation Sans', sans-serif;letter-spacing:0.713px;right:1155.80px;">$0.0997</div><div class="t" id="ar1_2" style="top:769.25px;font-size:14px;line-height:20px;color:#cbd5e1;font-weight:400;font-family:'Liberation Sans', sans-serif;letter-spacing:-0.460px;right:1040.40px;">191.0K</div><div class="t" id="ar1_3" style="top:769.25px;font-size:14px;line-height:20px;color:#cbd5e1;font-weight:400;font-family:'Liberation Sans', sans-serif;letter-spacing:0.368px;right:902.40px;">6.9K</div><div class="t" id="ar1_4" style="top:769.25px;font-size:14px;line-height:20px;color:#94a3b8;font-weight:400;font-family:'Liberation Sans', sans-serif;right:760.00px;">3</div><div class="t" id="ar2_0" style="top:811.37px;font-size:14px;line-height:20px;color:#60a5fa;font-weight:400;font-family:'Liberation Mono', monospace;letter-spacing:-0.200px;left:302.40px;">cto</div><div class="t" id="ar2_1" style="top:810.08px;font-size:14.5px;line-height:20px;color:#f1f5f9;font-weight:700;font-family:'Liberation Sans', sans-serif;letter-spacing:0.870px;right:1156.30px;">$0.0544</div><div class="t" id="ar2_2" style="top:810.25px;font-size:14px;line-height:20px;color:#cbd5e1;font-weight:400;font-family:'Liberation Sans', sans-serif;letter-spacing:0.150px;right:1039.90px;">37.4K</div><div class="t" id="ar2_3" style="top:810.25px;font-size:14px;line-height:20px;color:#cbd5e1;font-weight:400;font-family:'Liberation Sans', sans-serif;letter-spacing:0.368px;right:902.40px;">2.8K</div><div class="t" id="ar2_4" style="top:810.25px;font-size:14px;line-height:20px;color:#94a3b8;font-weight:400;font-family:'Liberation Sans', sans-serif;right:760.00px;">1</div><div class="t" id="mh0" style="top:692.84px;font-size:12px;line-height:16px;color:#64748b;font-weight:400;font-family:'Liberation Sans', sans-serif;letter-spacing:0.400px;left:1009.50px;-webkit-text-stroke:0.3px currentColor;">MODEL</div><div class="t" id="mh1" style="top:692.84px;font-size:12px;line-height:16px;color:#64748b;font-weight:400;font-family:'Liberation Sans', sans-serif;letter-spacing:0.465px;right:244.40px;-webkit-text-stroke:0.3px currentColor;">COST</div><div class="t" id="mh2" style="top:692.84px;font-size:12px;line-height:16px;color:#64748b;font-weight:400;font-family:'Liberation Sans', sans-serif;letter-spacing:0.525px;right:150.90px;-webkit-text-stroke:0.3px currentColor;">INPUT</div><div class="t" id="mh3" style="top:692.84px;font-size:12px;line-height:16px;color:#64748b;font-weight:400;font-family:'Liberation Sans', sans-serif;letter-spacing:0.400px;right:52.40px;-webkit-text-stroke:0.3px currentColor;">OUTPUT</div><div class="r" style="left:1009px;top:758px;width:650px;height:1px;background:rgba(51,65,85,0.55);"></div><div class="t" id="mr0_0" style="top:728.77px;font-size:12.5px;line-height:20px;color:#e2e8f0;font-weight:400;font-family:'Liberation Sans', sans-serif;letter-spacing:0.486px;left:1009.50px;">Unknown</div><div class="t" id="mr0_1" style="top:728.08px;font-size:14.5px;line-height:20px;color:#f1f5f9;font-weight:700;font-family:'Liberation Sans', sans-serif;letter-spacing:0.265px;right:244.40px;">$5.9391</div><div class="t" id="mr0_2" style="top:728.25px;font-size:14px;line-height:20px;color:#cbd5e1;font-weight:400;font-family:'Liberation Sans', sans-serif;letter-spacing:-0.025px;right:150.10px;">4.71M</div><div class="t" id="mr0_3" style="top:728.25px;font-size:14px;line-height:20px;color:#cbd5e1;font-weight:400;font-family:'Liberation Sans', sans-serif;letter-spacing:0.020px;right:52.00px;">221.6K</div><div class="r" style="left:1009px;top:799px;width:650px;height:1px;background:rgba(51,65,85,0.55);"></div><div class="t" id="mr1_0" style="top:769.77px;font-size:12.5px;line-height:20px;color:#e2e8f0;font-weight:400;font-family:'Liberation Sans', sans-serif;letter-spacing:0.367px;left:1010.00px;">openrouter/moonshotai/kimi-k2.5</div><div class="t" id="mr1_1" style="top:769.08px;font-size:14.5px;line-height:20px;color:#f1f5f9;font-weight:700;font-family:'Liberation Sans', sans-serif;letter-spacing:0.870px;right:243.90px;">$2.9684</div><div class="t" id="mr1_2" style="top:769.25px;font-size:14px;line-height:20px;color:#cbd5e1;font-weight:400;font-family:'Liberation Sans', sans-serif;letter-spacing:0.200px;right:150.10px;">2.31M</div><div class="t" id="mr1_3" style="top:769.25px;font-size:14px;line-height:20px;color:#cbd5e1;font-weight:400;font-family:'Liberation Sans', sans-serif;letter-spacing:0.120px;right:52.00px;">108.7K</div><div class="r" style="left:1009px;top:840px;width:650px;height:1px;background:rgba(51,65,85,0.55);"></div><div class="t" id="mr2_0" style="top:810.77px;font-size:12.5px;line-height:20px;color:#e2e8f0;font-weight:400;font-family:'Liberation Sans', sans-serif;letter-spacing:0.446px;left:1010.00px;">openrouter/openai/gpt-4o-mini</div><div class="t" id="mr2_1" style="top:810.08px;font-size:14.5px;line-height:20px;color:#f1f5f9;font-weight:700;font-family:'Liberation Sans', sans-serif;letter-spacing:0.833px;right:243.40px;">$0.0427</div><div class="t" id="mr2_2" style="top:810.25px;font-size:14px;line-height:20px;color:#cbd5e1;font-weight:400;font-family:'Liberation Sans', sans-serif;letter-spacing:0.020px;right:151.10px;">125.0K</div><div class="t" id="mr2_3" style="top:810.25px;font-size:14px;line-height:20px;color:#cbd5e1;font-weight:400;font-family:'Liberation Sans', sans-serif;letter-spacing:0.564px;right:51.50px;">2.0K</div><div class="r" style="left:1009px;top:881px;width:650px;height:1px;background:rgba(51,65,85,0.55);"></div><div class="t" id="mr3_0" style="top:851.77px;font-size:12.5px;line-height:20px;color:#e2e8f0;font-weight:400;font-family:'Liberation Sans', sans-serif;letter-spacing:0.321px;left:1010.00px;">openrouter/deepseek/deepseek-chat</div><div class="t" id="mr3_1" style="top:851.08px;font-size:14.5px;line-height:20px;color:#f1f5f9;font-weight:700;font-family:'Liberation Sans', sans-serif;letter-spacing:0.833px;right:243.40px;">$0.0282</div><div class="t" id="mr3_2" style="top:851.25px;font-size:14px;line-height:20px;color:#cbd5e1;font-weight:400;font-family:'Liberation Sans', sans-serif;letter-spacing:0.350px;right:150.60px;">86.7K</div><div class="t" id="mr3_3" style="top:851.25px;font-size:14px;line-height:20px;color:#cbd5e1;font-weight:400;font-family:'Liberation Sans', sans-serif;letter-spacing:1.600px;right:50.00px;">563</div><div class="r" style="left:1009px;top:922px;width:650px;height:1px;background:rgba(51,65,85,0.55);"></div><div class="t" id="mr4_0" style="top:892.77px;font-size:12.5px;line-height:20px;color:#e2e8f0;font-weight:400;font-family:'Liberation Sans', sans-serif;letter-spacing:0.449px;left:1009.50px;">bailian/glm-5</div><div class="t" id="mr4_1" style="top:892.08px;font-size:14.5px;line-height:20px;color:#f1f5f9;font-weight:700;font-family:'Liberation Sans', sans-serif;letter-spacing:0.349px;right:244.40px;">$0.0201</div><div class="t" id="mr4_2" style="top:892.25px;font-size:14px;line-height:20px;color:#cbd5e1;font-weight:400;font-family:'Liberation Sans', sans-serif;letter-spacing:0.350px;right:150.60px;">30.8K</div><div class="t" id="mr4_3" style="top:892.25px;font-size:14px;line-height:20px;color:#cbd5e1;font-weight:400;font-family:'Liberation Sans', sans-serif;letter-spacing:0.564px;right:51.50px;">2.0K</div><div class="r" style="left:1009px;top:963px;width:650px;height:1px;background:rgba(51,65,85,0.55);"></div><div class="t" id="mr5_0" style="top:933.77px;font-size:12.5px;line-height:20px;color:#e2e8f0;font-weight:400;font-family:'Liberation Sans', sans-serif;letter-spacing:0.428px;left:1009.50px;">bailian/kimi-k2.5</div><div class="t" id="mr5_1" style="top:933.08px;font-size:14.5px;line-height:20px;color:#f1f5f9;font-weight:700;font-family:'Liberation Sans', sans-serif;letter-spacing:0.950px;right:243.40px;">$0.00</div><div class="t" id="mr5_2" style="top:933.25px;font-size:14px;line-height:20px;color:#cbd5e1;font-weight:400;font-family:'Liberation Sans', sans-serif;letter-spacing:0.350px;right:150.60px;">93.8K</div><div class="t" id="mr5_3" style="top:933.25px;font-size:14px;line-height:20px;color:#cbd5e1;font-weight:400;font-family:'Liberation Sans', sans-serif;letter-spacing:1.600px;right:50.00px;">923</div>
</div></body></html>
